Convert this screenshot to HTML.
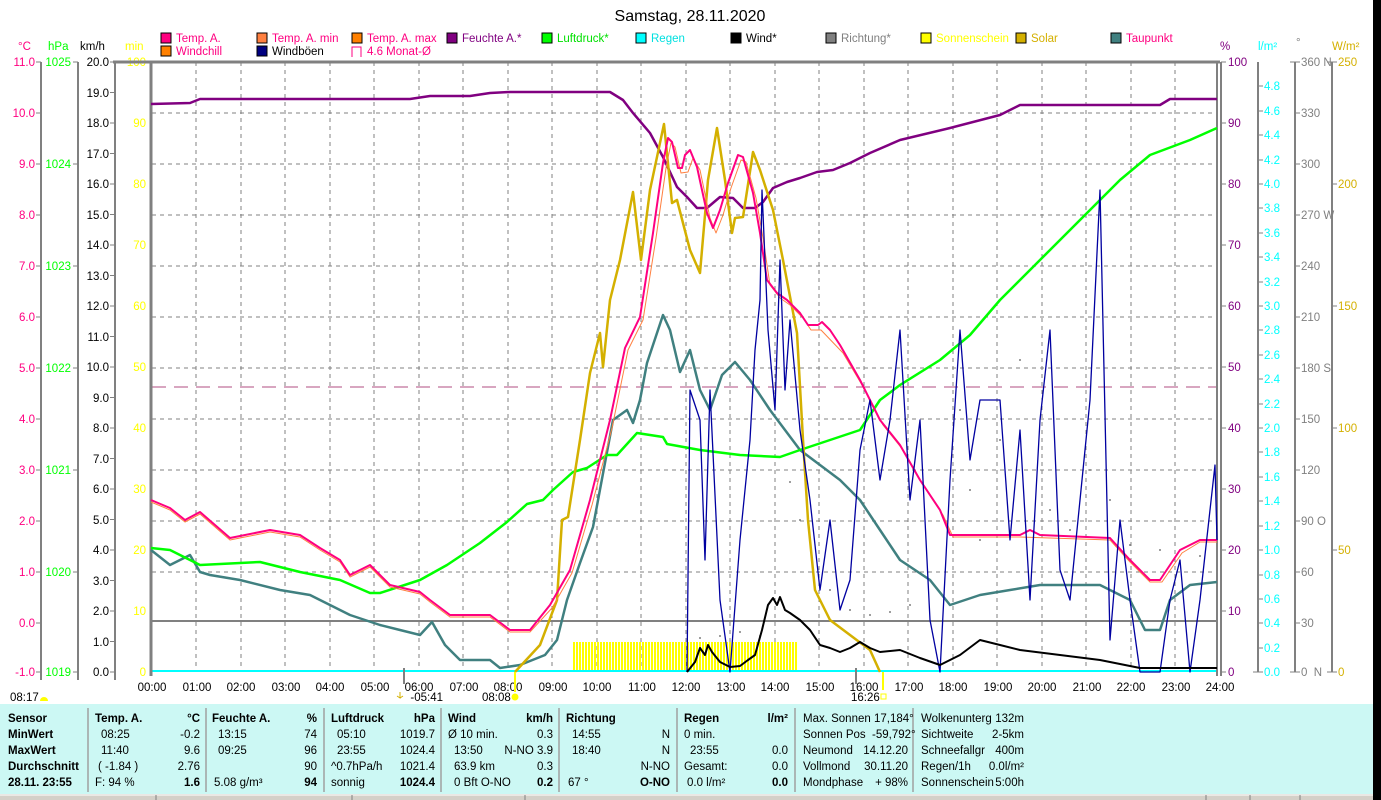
<!DOCTYPE html>
<html><head><meta charset="utf-8"><style>
html,body{margin:0;padding:0;background:#fff;width:1381px;height:800px;overflow:hidden}
svg{display:block}
text{font-family:"Liberation Sans",sans-serif;font-size:11.5px}
.t{font-size:12px}
.b{font-weight:bold}
</style></head><body>
<svg width="1381" height="800" viewBox="0 0 1381 800" xmlns="http://www.w3.org/2000/svg">
<defs>
<pattern id="sun" width="3" height="30" patternUnits="userSpaceOnUse" x="573"><rect x="0" y="0" width="2" height="30" fill="#ffff00"/></pattern>
</defs>
<rect x="1373" y="0" width="8" height="800" fill="#000"/>
<text x="690" y="21" text-anchor="middle" style="font-size:16px">Samstag, 28.11.2020</text>

<g>
<rect x="161" y="33" width="10" height="10" fill="#ff0080" stroke="#000"/><text x="176" y="42" fill="#ff0080">Temp. A.</text>
<rect x="257" y="33" width="10" height="10" fill="#ff8040" stroke="#000"/><text x="272" y="42" fill="#ff0080">Temp. A. min</text>
<rect x="352" y="33" width="10" height="10" fill="#ff8000" stroke="#000"/><text x="367" y="42" fill="#ff0080">Temp. A. max</text>
<rect x="447" y="33" width="10" height="10" fill="#800080" stroke="#000"/><text x="462" y="42" fill="#800080">Feuchte A.*</text>
<rect x="542" y="33" width="10" height="10" fill="#00ff00" stroke="#000"/><text x="557" y="42" fill="#00e000">Luftdruck*</text>
<rect x="636" y="33" width="10" height="10" fill="#00ffff" stroke="#000"/><text x="651" y="42" fill="#00e0e0">Regen</text>
<rect x="731" y="33" width="10" height="10" fill="#000" stroke="#000"/><text x="746" y="42" fill="#000">Wind*</text>
<rect x="826" y="33" width="10" height="10" fill="#808080" stroke="#000"/><text x="841" y="42" fill="#808080">Richtung*</text>
<rect x="921" y="33" width="10" height="10" fill="#ffff00" stroke="#000"/><text x="936" y="42" fill="#ffff00">Sonnenschein</text>
<rect x="1016" y="33" width="10" height="10" fill="#d4b000" stroke="#000"/><text x="1031" y="42" fill="#d4b000">Solar</text>
<rect x="1111" y="33" width="10" height="10" fill="#408080" stroke="#000"/><text x="1126" y="42" fill="#ff0080">Taupunkt</text>
<rect x="161" y="46" width="10" height="10" fill="#ff8000" stroke="#000"/><text x="176" y="55" fill="#ff0080">Windchill</text>
<rect x="257" y="46" width="10" height="10" fill="#000080" stroke="#000"/><text x="272" y="55" fill="#000">Windböen</text>
<path d="M352 57V47h9v10" fill="none" stroke="#ff0080"/><text x="367" y="55" fill="#ff0080">4.6 Monat-Ø</text>
</g>

<text x="18" y="50" fill="#ff0080">°C</text>
<text x="48" y="50" fill="#00ff00">hPa</text>
<text x="80" y="50" fill="#000">km/h</text>
<text x="125" y="50" fill="#ffff00">min</text>
<text x="1220" y="50" fill="#800080">%</text>
<text x="1258" y="50" fill="#00ffff">l/m²</text>
<text x="1296" y="46" fill="#808080">°</text>
<text x="1332" y="50" fill="#d4b000">W/m²</text>

<g stroke="#808080" stroke-width="2" fill="none">
<line x1="41" y1="62" x2="41" y2="680"/>
<line x1="78" y1="62" x2="78" y2="680"/>
<line x1="115" y1="62" x2="115" y2="680"/>
<line x1="1258" y1="62" x2="1258" y2="672"/>
<line x1="1295" y1="62" x2="1295" y2="672"/>
<line x1="1332" y1="62" x2="1332" y2="672"/>
</g>
<g fill="#ff0080" text-anchor="end">
<text x="35" y="66">11.0</text><text x="35" y="117">10.0</text><text x="35" y="168">9.0</text><text x="35" y="219">8.0</text><text x="35" y="270">7.0</text><text x="35" y="321">6.0</text><text x="35" y="372">5.0</text><text x="35" y="423">4.0</text><text x="35" y="474">3.0</text><text x="35" y="525">2.0</text><text x="35" y="576">1.0</text><text x="35" y="627">0.0</text><text x="35" y="676">-1.0</text>
</g>
<g stroke="#808080">
<path d="M36 62h5M36 113h5M36 164h5M36 215h5M36 266h5M36 317h5M36 368h5M36 419h5M36 470h5M36 521h5M36 572h5M36 623h5M36 672h5"/>
<path d="M73 62h5M73 164h5M73 266h5M73 368h5M73 470h5M73 572h5M73 672h5"/>
<path d="M110 62h5M110 92.5h5M110 123h5M110 153.5h5M110 184h5M110 214.5h5M110 245h5M110 275.5h5M110 306h5M110 336.5h5M110 367h5M110 397.5h5M110 428h5M110 458.5h5M110 489h5M110 519.5h5M110 550h5M110 580.5h5M110 611h5M110 641.5h5M110 672h5"/>
<path d="M1221 62h5M1221 123h5M1221 184h5M1221 245h5M1221 306h5M1221 367h5M1221 428h5M1221 489h5M1221 550h5M1221 611h5M1221 672h5"/>
<path d="M1253 672h10M1258 648h5M1258 623h5M1258 599h5M1258 575h5M1258 550h5M1258 526h5M1258 501h5M1258 477h5M1258 452h5M1258 428h5M1258 404h5M1258 379h5M1258 355h5M1258 330h5M1258 306h5M1258 282h5M1258 257h5M1258 233h5M1258 208h5M1258 184h5M1258 160h5M1258 135h5M1258 111h5M1258 86h5"/>
<path d="M1290 62h10M1295 113h5M1295 164h5M1295 215h5M1295 266h5M1295 317h5M1295 368h5M1295 419h5M1295 470h5M1295 521h5M1295 572h5M1295 623h5M1290 672h10"/>
<path d="M1327 62h10M1332 184h5M1332 306h5M1332 428h5M1332 550h5M1327 672h10"/>
</g>
<g fill="#00ff00" text-anchor="end">
<text x="71" y="66">1025</text><text x="71" y="168">1024</text><text x="71" y="270">1023</text><text x="71" y="372">1022</text><text x="71" y="474">1021</text><text x="71" y="576">1020</text><text x="71" y="676">1019</text>
</g>
<g fill="#000" text-anchor="end">
<text x="109" y="66">20.0</text><text x="109" y="97">19.0</text><text x="109" y="127">18.0</text><text x="109" y="158">17.0</text><text x="109" y="188">16.0</text><text x="109" y="219">15.0</text><text x="109" y="249">14.0</text><text x="109" y="280">13.0</text><text x="109" y="310">12.0</text><text x="109" y="341">11.0</text><text x="109" y="371">10.0</text><text x="109" y="402">9.0</text><text x="109" y="432">8.0</text><text x="109" y="463">7.0</text><text x="109" y="493">6.0</text><text x="109" y="524">5.0</text><text x="109" y="554">4.0</text><text x="109" y="585">3.0</text><text x="109" y="615">2.0</text><text x="109" y="646">1.0</text><text x="109" y="676">0.0</text>
</g>
<g fill="#ffff00" text-anchor="end">
<text x="146" y="66">100</text><text x="146" y="127">90</text><text x="146" y="188">80</text><text x="146" y="249">70</text><text x="146" y="310">60</text><text x="146" y="371">50</text><text x="146" y="432">40</text><text x="146" y="493">30</text><text x="146" y="554">20</text><text x="146" y="615">10</text><text x="146" y="676">0</text>
</g>
<g fill="#800080">
<text x="1228" y="66">100</text><text x="1228" y="127">90</text><text x="1228" y="188">80</text><text x="1228" y="249">70</text><text x="1228" y="310">60</text><text x="1228" y="371">50</text><text x="1228" y="432">40</text><text x="1228" y="493">30</text><text x="1228" y="554">20</text><text x="1228" y="615">10</text><text x="1228" y="676">0</text>
</g>
<g fill="#00ffff">
<text x="1264" y="90">4.8</text><text x="1264" y="115">4.6</text><text x="1264" y="139">4.4</text><text x="1264" y="164">4.2</text><text x="1264" y="188">4.0</text><text x="1264" y="212">3.8</text><text x="1264" y="237">3.6</text><text x="1264" y="261">3.4</text><text x="1264" y="286">3.2</text><text x="1264" y="310">3.0</text><text x="1264" y="334">2.8</text><text x="1264" y="359">2.6</text><text x="1264" y="383">2.4</text><text x="1264" y="408">2.2</text><text x="1264" y="432">2.0</text><text x="1264" y="456">1.8</text><text x="1264" y="481">1.6</text><text x="1264" y="505">1.4</text><text x="1264" y="530">1.2</text><text x="1264" y="554">1.0</text><text x="1264" y="579">0.8</text><text x="1264" y="603">0.6</text><text x="1264" y="627">0.4</text><text x="1264" y="652">0.2</text><text x="1264" y="676">0.0</text>
</g>
<g fill="#808080">
<text x="1301" y="66">360 N</text><text x="1301" y="117">330</text><text x="1301" y="168">300</text><text x="1301" y="219">270 W</text><text x="1301" y="270">240</text><text x="1301" y="321">210</text><text x="1301" y="372">180 S</text><text x="1301" y="423">150</text><text x="1301" y="474">120</text><text x="1301" y="525">90 O</text><text x="1301" y="576">60</text><text x="1301" y="627">30</text><text x="1301" y="676">0 &#160;N</text>
</g>
<g fill="#d4b000">
<text x="1338" y="66">250</text><text x="1338" y="188">200</text><text x="1338" y="310">150</text><text x="1338" y="432">100</text><text x="1338" y="554">50</text><text x="1338" y="676">0</text>
</g>

<g stroke="#808080" stroke-dasharray="4,4" stroke-width="1">
<path d="M196 62V672M241 62V672M285 62V672M330 62V672M374 62V672M419 62V672M463 62V672M508 62V672M552 62V672M597 62V672M641 62V672M686 62V672M730 62V672M775 62V672M819 62V672M864 62V672M908 62V672M953 62V672M997 62V672M1042 62V672M1086 62V672M1131 62V672M1175 62V672"/>
<path d="M152 113H1217M152 164H1217M152 215H1217M152 266H1217M152 317H1217M152 368H1217M152 419H1217M152 470H1217M152 521H1217M152 572H1217"/>
</g>
<line x1="152" y1="387" x2="1217" y2="387" stroke="#ff0080" stroke-dasharray="14,8"/>
<line x1="152" y1="387" x2="1217" y2="387" stroke="#808080" stroke-dasharray="14,8" opacity="0.6"/>
<line x1="152" y1="621" x2="1217" y2="621" stroke="#808080" stroke-width="2"/>
<rect x="573" y="642" width="225" height="30" fill="url(#sun)"/>
<line x1="152" y1="671" x2="1217" y2="671" stroke="#00ffff" stroke-width="2"/>
<g stroke="#808080" fill="none">
<path d="M113 62H1220" stroke-width="3"/>
<path d="M151 62V676" stroke-width="3"/>
<path d="M1217 62V676M1221 62V676" stroke-width="2"/>
<path d="M404 668V684M856 668V684" stroke-width="2"/>
</g>

<g fill="#808080">
<circle cx="700" cy="638" r="1"/><circle cx="720" cy="636" r="1"/><circle cx="740" cy="632" r="1"/><circle cx="760" cy="636" r="1"/><circle cx="790" cy="482" r="1"/><circle cx="800" cy="520" r="1"/><circle cx="812" cy="560" r="1"/><circle cx="830" cy="590" r="1"/><circle cx="850" cy="610" r="1"/><circle cx="870" cy="615" r="1"/><circle cx="890" cy="612" r="1"/><circle cx="910" cy="605" r="1"/><circle cx="960" cy="410" r="1"/><circle cx="970" cy="490" r="1"/><circle cx="980" cy="540" r="1"/><circle cx="1000" cy="440" r="1"/><circle cx="1020" cy="360" r="1"/><circle cx="1050" cy="510" r="1"/><circle cx="1070" cy="530" r="1"/><circle cx="1090" cy="470" r="1"/><circle cx="1110" cy="500" r="1"/><circle cx="1130" cy="545" r="1"/><circle cx="1160" cy="550" r="1"/><circle cx="1200" cy="556" r="1"/>
</g>

<g fill="none" stroke-linejoin="round">
<polyline stroke="#408080" stroke-width="2.5" points="151,550 170,565 180,560 190,555 200,572 210,575 240,580 280,590 310,595 350,615 380,625 400,630 420,635 432,622 445,645 460,660 490,660 500,668 520,665 545,655 557,640 567,600 580,563 593,527 613,420 627,410 633,423 640,400 647,363 657,333 663,315 670,330 680,372 690,350 700,390 710,410 722,375 735,362 750,380 770,410 800,450 820,465 840,480 860,500 880,530 900,560 930,580 950,605 980,595 1010,590 1040,585 1100,585 1130,600 1145,630 1160,630 1170,600 1190,585 1217,582"/>
<polyline stroke="#00ff00" stroke-width="2.5" points="151,548 170,550 200,565 260,562 300,572 340,580 370,593 380,593 420,580 447,565 480,543 507,522 527,504 543,500 553,490 573,472 587,468 607,455 617,455 637,433 663,437 667,444 700,450 740,455 780,457 800,450 830,440 860,430 880,400 900,385 940,360 970,335 1000,300 1030,270 1060,240 1090,210 1120,180 1150,155 1190,140 1217,128"/>
<polyline stroke="#800080" stroke-width="2.5" points="151,104 190,103 200,99 410,99 430,96 470,96 490,93 510,92 610,92 623,100 633,113 650,133 663,157 677,187 687,197 697,208 707,208 720,197 733,198 743,208 755,208 763,202 773,188 787,182 800,178 817,172 833,170 850,163 870,153 900,140 950,128 1000,115 1020,105 1160,105 1170,99 1217,99"/>
<polyline stroke="#d4b000" stroke-width="2.5" points="515,672 540,645 557,600 562,520 568,517 580,440 590,373 600,333 603,367 610,300 620,260 633,192 641,260 650,190 664,124 672,203 677,200 690,250 700,273 708,180 717,128 725,180 732,233 735,218 743,217 753,152 760,170 773,210 783,260 797,333 803,440 808,520 815,590 830,620 850,635 870,650 880,672"/>
<polyline stroke="#ff8040" stroke-width="1" points="151,502 170,510 185,522 200,514 230,540 270,532 300,537 320,550 340,562 350,577 370,567 390,587 420,594 430,602 450,617 490,617 510,632 530,632 552,608 572,573 592,505 612,428 628,350 643,320 656,238 666,168 671,143 675,147 681,173 688,172 693,158 700,170 710,218 716,233 723,215 731,188 741,160 746,162 756,198 763,238 770,285 780,298 790,305 803,318 811,330 821,330 843,353 862,385 883,425 903,450 923,485 943,515 953,537 1020,537 1110,540 1130,562 1150,582 1162,582 1182,553 1200,542 1217,542"/>
<polyline stroke="#ff0080" stroke-width="2" points="151,500 170,508 185,520 200,512 230,538 270,530 300,535 320,548 340,560 350,575 370,565 390,585 420,592 430,600 450,615 490,615 510,630 530,630 550,605 570,570 590,500 610,420 625,348 640,317 653,233 663,163 668,138 672,142 678,168 682,168 685,155 690,150 697,167 707,213 713,228 720,210 728,183 738,155 743,157 753,193 760,233 767,280 777,293 787,300 800,313 808,325 818,325 822,322 830,330 840,345 860,380 880,420 900,445 920,480 940,510 950,535 1020,535 1030,530 1040,535 1110,538 1130,560 1150,580 1160,580 1180,550 1200,540 1217,540"/>
<polyline stroke="#0000a0" stroke-width="1.3" points="687,672 690,390 700,420 705,560 710,390 720,600 730,672 740,540 750,440 755,350 760,300 762,190 768,330 775,410 780,260 785,390 790,320 800,430 810,500 820,590 830,520 840,610 850,580 860,450 870,400 880,480 890,420 900,330 910,500 920,420 930,620 940,672 950,480 960,330 970,460 980,400 1000,400 1010,540 1020,430 1030,600 1040,420 1050,330 1060,570 1070,600 1080,500 1090,400 1100,190 1110,640 1120,520 1130,600 1140,672 1160,672 1170,600 1180,560 1190,672 1200,600 1215,465 1217,540"/>
<polyline stroke="#000" stroke-width="2" points="687,672 695,662 700,648 705,655 708,645 712,652 720,662 730,667 740,666 748,660 755,655 762,630 768,605 773,598 777,605 780,597 785,610 790,613 800,620 810,630 820,645 830,648 840,652 850,648 860,642 870,648 880,652 900,650 920,658 940,665 960,655 980,640 1000,645 1020,650 1060,655 1100,660 1140,668 1217,668"/>
</g>

<g fill="#000" text-anchor="middle">
<text x="152" y="691">00:00</text><text x="197" y="691">01:00</text><text x="241" y="691">02:00</text><text x="286" y="691">03:00</text><text x="330" y="691">04:00</text><text x="375" y="691">05:00</text><text x="419" y="691">06:00</text><text x="464" y="691">07:00</text><text x="508" y="691">08:00</text><text x="553" y="691">09:00</text><text x="597" y="691">10:00</text><text x="642" y="691">11:00</text><text x="686" y="691">12:00</text><text x="731" y="691">13:00</text><text x="775" y="691">14:00</text><text x="820" y="691">15:00</text><text x="864" y="691">16:00</text><text x="909" y="691">17:00</text><text x="953" y="691">18:00</text><text x="998" y="691">19:00</text><text x="1042" y="691">20:00</text><text x="1087" y="691">21:00</text><text x="1131" y="691">22:00</text><text x="1176" y="691">23:00</text><text x="1220" y="691">24:00</text>
</g>
<text x="10" y="701">08:17</text><path d="M40 701a4 4 0 0 1 8 0z" fill="#ffff00"/>
<text x="404" y="701">&#160;&#160;-05:41</text><path d="M400 692v6l-3 -2M400 698l3-2" stroke="#d4b000" fill="none"/>
<text x="482" y="701">08:08</text><circle cx="515" cy="697" r="3.5" fill="#ffff00"/>
<line x1="515" y1="672" x2="515" y2="692" stroke="#ffff00" stroke-width="2"/>
<text x="851" y="701">16:26</text><rect x="881" y="694" width="5" height="5" fill="none" stroke="#ffff00"/>
<line x1="883" y1="672" x2="883" y2="690" stroke="#ffff00" stroke-width="2"/>

<rect x="0" y="704" width="1373" height="90" fill="#ccf8f4"/>
<g stroke="#a0a0a0" stroke-width="1.5">
<path d="M88 708V792M206 708V792M324 708V792M441 708V792M559 708V792M677 708V792M795 708V792M913 708V792"/>
</g>
<rect x="0" y="794" width="1373" height="6" fill="#d4d0c8"/>
<path d="M0 795H1373" stroke="#fff"/>
<path d="M156 795V800M352 795V800M525 795V800M1206 795V800M1250 795V800M1300 795V800" stroke="#808080"/>

<g class="t">
<text x="8" y="722" class="b">Sensor</text>
<text x="8" y="738" class="b">MinWert</text>
<text x="8" y="754" class="b">MaxWert</text>
<text x="8" y="770" class="b">Durchschnitt</text>
<text x="8" y="786" class="b">28.11. 23:55</text>

<text x="95" y="722" class="b">Temp. A.</text><text x="200" y="722" class="b" text-anchor="end">°C</text>
<text x="101" y="738">08:25</text><text x="200" y="738" text-anchor="end">-0.2</text>
<text x="101" y="754">11:40</text><text x="200" y="754" text-anchor="end">9.6</text>
<text x="98" y="770">( -1.84 )</text><text x="200" y="770" text-anchor="end">2.76</text>
<text x="95" y="786">F: 94 %</text><text x="200" y="786" class="b" text-anchor="end">1.6</text>

<text x="212" y="722" class="b">Feuchte A.</text><text x="317" y="722" class="b" text-anchor="end">%</text>
<text x="218" y="738">13:15</text><text x="317" y="738" text-anchor="end">74</text>
<text x="218" y="754">09:25</text><text x="317" y="754" text-anchor="end">96</text>
<text x="317" y="770" text-anchor="end">90</text>
<text x="214" y="786">5.08 g/m³</text><text x="317" y="786" class="b" text-anchor="end">94</text>

<text x="331" y="722" class="b">Luftdruck</text><text x="435" y="722" class="b" text-anchor="end">hPa</text>
<text x="337" y="738">05:10</text><text x="435" y="738" text-anchor="end">1019.7</text>
<text x="337" y="754">23:55</text><text x="435" y="754" text-anchor="end">1024.4</text>
<text x="331" y="770">^0.7hPa/h</text><text x="435" y="770" text-anchor="end">1021.4</text>
<text x="331" y="786">sonnig</text><text x="435" y="786" class="b" text-anchor="end">1024.4</text>

<text x="448" y="722" class="b">Wind</text><text x="553" y="722" class="b" text-anchor="end">km/h</text>
<text x="448" y="738">Ø 10 min.</text><text x="553" y="738" text-anchor="end">0.3</text>
<text x="454" y="754">13:50</text><text x="553" y="754" text-anchor="end">N-NO 3.9</text>
<text x="454" y="770">63.9 km</text><text x="553" y="770" text-anchor="end">0.3</text>
<text x="454" y="786">0 Bft O-NO</text><text x="553" y="786" class="b" text-anchor="end">0.2</text>

<text x="566" y="722" class="b">Richtung</text>
<text x="572" y="738">14:55</text><text x="670" y="738" text-anchor="end">N</text>
<text x="572" y="754">18:40</text><text x="670" y="754" text-anchor="end">N</text>
<text x="670" y="770" text-anchor="end">N-NO</text>
<text x="568" y="786">67 °</text><text x="670" y="786" class="b" text-anchor="end">O-NO</text>

<text x="684" y="722" class="b">Regen</text><text x="788" y="722" class="b" text-anchor="end">l/m²</text>
<text x="684" y="738">0 min.</text>
<text x="690" y="754">23:55</text><text x="788" y="754" text-anchor="end">0.0</text>
<text x="684" y="770">Gesamt:</text><text x="788" y="770" text-anchor="end">0.0</text>
<text x="687" y="786">0.0 l/m²</text><text x="788" y="786" class="b" text-anchor="end">0.0</text>

<text x="803" y="722">Max. Sonnen 17,184°</text>
<text x="803" y="738">Sonnen Pos &#160;-59,792°</text>
<text x="803" y="754">Neumond</text><text x="908" y="754" text-anchor="end">14.12.20</text>
<text x="803" y="770">Vollmond</text><text x="908" y="770" text-anchor="end">30.11.20</text>
<text x="803" y="786">Mondphase</text><text x="908" y="786" text-anchor="end">+ 98%</text>

<text x="921" y="722">Wolkenunterg</text><text x="1024" y="722" text-anchor="end">132m</text>
<text x="921" y="738">Sichtweite</text><text x="1024" y="738" text-anchor="end">2-5km</text>
<text x="921" y="754">Schneefallgr</text><text x="1024" y="754" text-anchor="end">400m</text>
<text x="921" y="770">Regen/1h</text><text x="1024" y="770" text-anchor="end">0.0l/m²</text>
<text x="921" y="786">Sonnenschein</text><text x="1024" y="786" text-anchor="end">5:00h</text>
</g>
</svg>
</body></html>
